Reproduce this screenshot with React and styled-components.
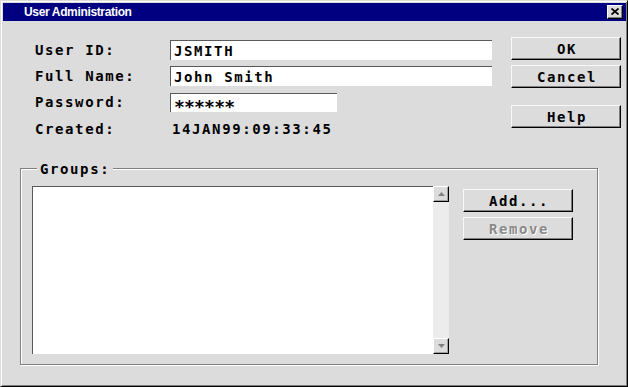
import React from "react"
import styled, { createGlobalStyle } from "styled-components"

// page
const GlobalStyle = createGlobalStyle`
  html, body {
    margin: 0;
    padding: 0;
    background: #dcdcdc;
  }
  * {
    box-sizing: border-box;
  }
`

const UserAdministration = () => {
  return (
    <Window>
      <GlobalStyle />
      <TitleBar>
        <Title>User Administration</Title>
        <CloseButton aria-label="Close">
          <svg width="8" height="7" viewBox="0 0 8 7">
            <path d="M0.5 0.5 L7.5 6.5 M7.5 0.5 L0.5 6.5" stroke="#000" strokeWidth="1.7" />
          </svg>
        </CloseButton>
      </TitleBar>

      <Body>
        <TopSection>
          <Form>
            <Label>User ID:</Label>
            <Field>JSMITH</Field>
            <Label>Full Name:</Label>
            <Field>John Smith</Field>
            <Label>Password:</Label>
            <Field $width={167} $height={19} $masked>******</Field>
            <Label>Created:</Label>
            <Value>14JAN99:09:33:45</Value>
          </Form>
          <ButtonColumn>
            <Button>OK</Button>
            <Button $top={5}>Cancel</Button>
            <Button $top={17}>Help</Button>
          </ButtonColumn>
        </TopSection>

        <GroupBox>
          <Legend>Groups:</Legend>
          <ListBox>
            <ListArea />
            <ScrollBar>
              <ScrollButton>
                <svg width="7" height="4" viewBox="0 0 7 4">
                  <path d="M3.5 0 L7 4 L0 4 Z" fill="#808080" />
                </svg>
              </ScrollButton>
              <ScrollButton>
                <svg width="7" height="4" viewBox="0 0 7 4">
                  <path d="M0 0 L7 0 L3.5 4 Z" fill="#808080" />
                </svg>
              </ScrollButton>
            </ScrollBar>
          </ListBox>
          <GroupButtons>
            <Button>Add...</Button>
            <Button $top={5} disabled>Remove</Button>
          </GroupButtons>
        </GroupBox>
      </Body>
    </Window>
  )
}

export default UserAdministration

// styles
const Window = styled.div`
  width: 628px;
  height: 387px;
  background: #dcdcdc;
  border: 1px solid;
  border-color: #dcdcdc #000 #000 #dcdcdc;
  box-shadow: inset 1px 1px 0 #fff, inset -1px -1px 0 #808080;
  padding: 2px 1px 1px 2px;
  display: flex;
  flex-direction: column;
  font-family: "DejaVu Sans Mono", "Liberation Mono", monospace;
`

const TitleBar = styled.div`
  height: 18px;
  flex: none;
  background: #000080;
  display: flex;
  align-items: center;
  justify-content: space-between;
  padding: 0 3px 0 21px;
`

const Title = styled.span`
  color: #fff;
  font-family: "Liberation Sans", Arial, sans-serif;
  font-weight: bold;
  font-size: 12px;
  letter-spacing: -0.35px;
`

const CloseButton = styled.div`
  width: 16px;
  height: 14px;
  background: #dcdcdc;
  border: 1px solid;
  border-color: #fff #000 #000 #fff;
  box-shadow: inset -1px -1px 0 #808080;
  display: flex;
  align-items: center;
  justify-content: center;
  padding-bottom: 1px;
`

const Body = styled.div`
  flex: 1;
  padding: 16px 0 0 17px;
`

const TopSection = styled.div`
  display: flex;
  align-items: flex-start;
  gap: 19px;
  padding-left: 15px;
`

const Form = styled.div`
  display: grid;
  grid-template-columns: 135px 322px;
  grid-template-rows: 20px 20px 20px 22px;
  row-gap: 6px;
  margin-top: 3px;
`

const Label = styled.div`
  display: flex;
  align-items: center;
  font-size: 14px;
  font-weight: bold;
  letter-spacing: 1.6px;
  color: #000;
`

const Field = styled.div`
  width: ${p => (p.$width ? `${p.$width}px` : "100%")};
  height: ${p => p.$height || 20}px;
  align-self: end;
  background: #fff;
  border-top: 1px solid #5a5a5a;
  border-left: 1px solid #5a5a5a;
  padding: ${p => (p.$masked ? "6px 0 0 3px" : "0 0 0 3px")};
  display: flex;
  align-items: center;
  font-size: ${p => (p.$masked ? 18 : 14)}px;
  font-weight: bold;
  letter-spacing: ${p => (p.$masked ? -0.8 : 1.6)}px;
  color: #000;
`

const Value = styled(Label)`
  padding-left: 2px;
`

const ButtonColumn = styled.div`
  display: flex;
  flex-direction: column;
`

const Button = styled.button`
  width: 110px;
  height: 23px;
  margin-top: ${p => p.$top || 0}px;
  padding: 0 0 0 2px;
  background: #dcdcdc;
  border: 1px solid;
  border-color: #f8f8f8 #000 #000 #f8f8f8;
  box-shadow: inset -1px -1px 0 #808080;
  border-radius: 0;
  font-family: "DejaVu Sans Mono", "Liberation Mono", monospace;
  font-size: 14px;
  font-weight: bold;
  letter-spacing: 1.6px;
  color: #000;
  outline: none;

  &:disabled {
    color: #8a8a8a;
    text-shadow: 1px 1px 0 #fff;
  }
`

const GroupBox = styled.div`
  position: relative;
  width: 578px;
  height: 197px;
  margin-top: 28px;
  border: 1px solid #808080;
  box-shadow: inset 1px 1px 0 #fff, 1px 1px 0 #fff;
  padding: 17px 0 0 11px;
  display: flex;
  align-items: flex-start;
  gap: 14px;
`

const Legend = styled.span`
  position: absolute;
  top: -8px;
  left: 16px;
  padding: 0 3px;
  background: #dcdcdc;
  font-size: 14px;
  font-weight: bold;
  letter-spacing: 1.6px;
  color: #000;
`

const ListBox = styled.div`
  width: 417px;
  height: 168px;
  display: flex;
`

const ListArea = styled.div`
  flex: 1;
  background: #fff;
  border-top: 1px solid #5a5a5a;
  border-left: 1px solid #5a5a5a;
`

const ScrollBar = styled.div`
  width: 16px;
  background: #ececec;
  display: flex;
  flex-direction: column;
  justify-content: space-between;
`

const ScrollButton = styled.div`
  width: 16px;
  height: 16px;
  background: #dcdcdc;
  border: 1px solid;
  border-color: #fff #000 #000 #fff;
  box-shadow: inset -1px -1px 0 #a0a0a0;
  display: flex;
  align-items: center;
  justify-content: center;
`

const GroupButtons = styled.div`
  display: flex;
  flex-direction: column;
  margin-top: 3px;
`
